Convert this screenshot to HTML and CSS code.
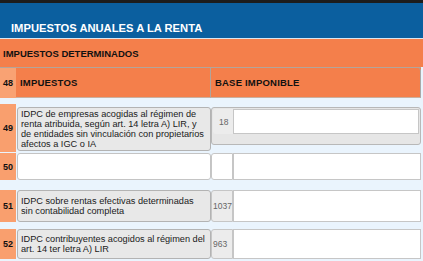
FILE: index.html
```html
<!DOCTYPE html>
<html lang="es">
<head>
  <meta charset="UTF-8" />
  <title>Impuestos anuales a la renta</title>
  <link rel="stylesheet" href="styles.css">
</head>
<body>
  <div class="top-strip"></div>
  <div class="banner">IMPUESTOS ANUALES A LA RENTA</div>
  <div class="section">IMPUESTOS DETERMINADOS</div>

  <div class="head-row">
    <div class="num head-num">48</div>
    <div class="head-cell head-label">IMPUESTOS</div>
    <div class="head-cell head-value">BASE IMPONIBLE</div>
  </div>

  <div class="row row-49">
    <div class="num">49</div>
    <div class="label">IDPC de empresas acogidas al régimen de renta atribuida, según art. 14 letra A) LIR, y de entidades sin vinculación con propietarios afectos a IGC o IA</div>
    <div class="value boxed">
      <div class="code">18</div>
      <div class="input"></div>
    </div>
  </div>

  <div class="row row-50">
    <div class="num">50</div>
    <div class="label blank"></div>
    <div class="value">
      <div class="code blank"></div>
      <div class="input"></div>
    </div>
  </div>

  <div class="row row-51">
    <div class="num">51</div>
    <div class="label">IDPC sobre rentas efectivas determinadas sin contabilidad completa</div>
    <div class="value">
      <div class="code">1037</div>
      <div class="input"></div>
    </div>
  </div>

  <div class="row row-52">
    <div class="num">52</div>
    <div class="label">IDPC contribuyentes acogidos al régimen del art. 14 ter letra A) LIR</div>
    <div class="value">
      <div class="code">963</div>
      <div class="input"></div>
    </div>
  </div>
</body>
</html>
```

FILE: styles.css
```css
body {
  margin: 0;
  background-color: #eaf4fd;
  font-family: 'Liberation Sans', Arial, sans-serif;
  color: #111;
  overflow: hidden;
}

.top-strip {
  height: 3px;
  background-color: #1d1d1d;
}

.banner {
  height: 36px;
  box-sizing: border-box;
  padding: 19px 0 0 11px;
  background-color: #0b5f9f;
  border-bottom: 1px solid #d9e6f0;
  color: white;
  font-size: 11.2px;
  font-weight: bold;
  line-height: 13px;
}

.section {
  height: 28px;
  box-sizing: border-box;
  padding: 9px 0 0 3px;
  background-color: #f47f4b;
  font-size: 9.5px;
  font-weight: bold;
  line-height: 12px;
}

.head-row {
  display: grid;
  grid-template-columns: 16px 195px 1fr;
  height: 30px;
  margin-right: 2px;
  background-color: #f47f4b;
  border-top: 1px solid #b4a49a;
}

.head-cell {
  display: flex;
  align-items: center;
  padding-left: 4px;
  font-size: 9.5px;
  font-weight: bold;
  letter-spacing: 0.2px;
}

.head-label {
  border-right: 1px solid #b0a49c;
  border-bottom: 1px solid #c9b0a0;
}

.head-value {
  border-right: 1px solid #a9a9a9;
  border-bottom: 1px solid #c9b0a0;
  border-top-right-radius: 3px;
}

.num {
  display: flex;
  align-items: center;
  padding-left: 3px;
  background-color: #f99f6e;
  font-size: 9px;
  font-weight: bold;
}

.head-num {
  background-color: #f9a273;
}

.row {
  display: grid;
  grid-template-columns: 16px 195px 1fr;
  margin-right: 2px;
}

.row-49 {
  margin-top: 6px;
  height: 48px;
}

.row-50 {
  margin-top: 1px;
  height: 27px;
}

.row-51 {
  margin-top: 10px;
  height: 32px;
}

.row-52 {
  margin-top: 7px;
  height: 30px;
}

.label {
  display: flex;
  align-items: center;
  margin-left: 1px;
  padding: 1px 2.2px 1px 3px;
  background-color: #e8e8e8;
  border: 1px solid #b3b3b3;
  border-radius: 3px;
  font-size: 9.2px;
  line-height: 10px;
  color: #1a1a1a;
}

.row-49 .label {
  margin-top: 3px;
  margin-bottom: 1px;
}

.label.blank {
  background-color: white;
  border-color: #c4c4c4;
}

.value {
  display: flex;
  align-items: stretch;
}

.value.boxed {
  margin-top: 3px;
  height: 38px;
  box-sizing: border-box;
  padding: 1px 1px 10px 1px;
  background-color: #e6e6e6;
  border: 1px solid #b8b8b8;
  border-radius: 3px;
}

.code {
  box-sizing: border-box;
  width: 22px;
  padding-left: 1px;
  display: flex;
  align-items: center;
  background-color: #ececec;
  border: 1px solid #c6c6c6;
  border-radius: 3px 0 0 3px;
  font-size: 8.5px;
  color: #666;
}

.value.boxed .code {
  width: 20px;
  border: none;
  padding-left: 6px;
}

.code.blank {
  background-color: white;
}

.input {
  flex: 1;
  background-color: white;
  border: 1px solid #c6c6c6;
}
```
